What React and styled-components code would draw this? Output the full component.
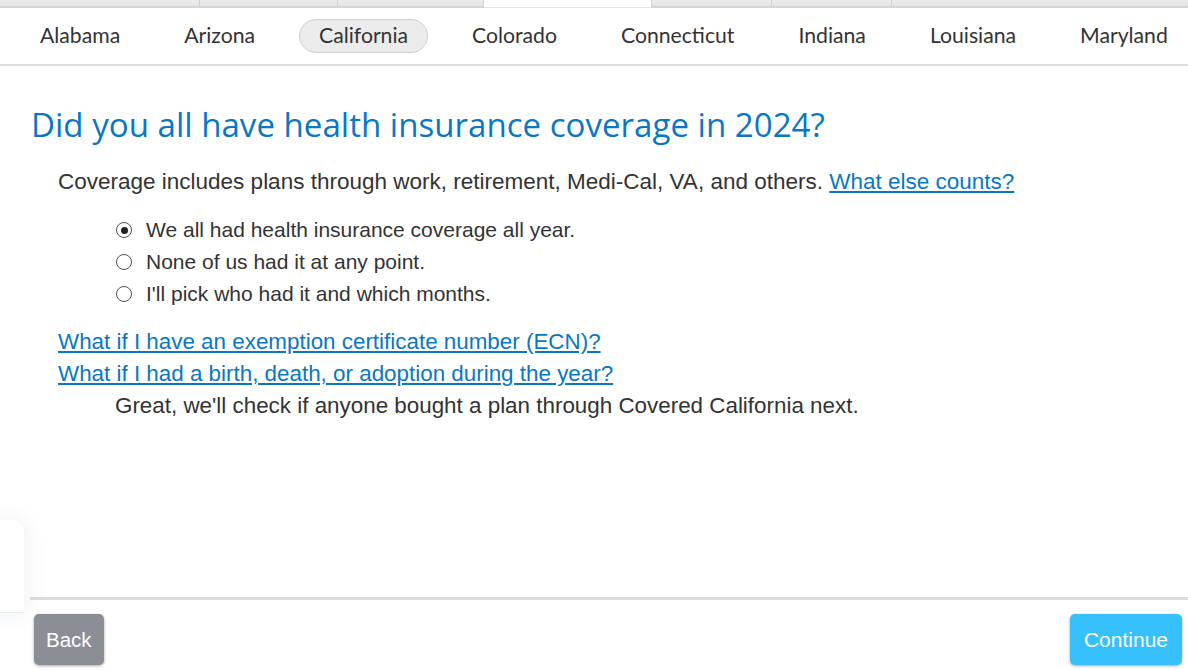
import styled, { createGlobalStyle } from "styled-components";

const GlobalStyle = createGlobalStyle`
  body {
    margin: 0;
    background: #fff;
    font-family: "Liberation Sans", Arial, sans-serif;
    color: #333;
  }
`;

const topTabs = [200, 138, 146, 168, 120, 120, 296];
const states = ["Alabama", "Arizona", "California", "Colorado", "Connecticut", "Indiana", "Louisiana", "Maryland"];

const App = () => {
  return (
    <Page>
      <GlobalStyle />
      <TabStrip>
        {topTabs.map((w, i) => (
          <TopTab key={i} style={{ width: w }} active={i === 3} />
        ))}
      </TabStrip>
      <StateNav>
        {states.map((s) => (
          <StateItem key={s} selected={s === "California"}>{s}</StateItem>
        ))}
      </StateNav>

      <Content>
        <Heading>Did you all have health insurance coverage in 2024?</Heading>
        <Intro>
          Coverage includes plans through work, retirement, Medi-Cal, VA, and others.{" "}
          <Link href="#">What else counts?</Link>
        </Intro>
        <RadioList>
          <RadioRow><Radio checked /> We all had health insurance coverage all year.</RadioRow>
          <RadioRow><Radio /> None of us had it at any point.</RadioRow>
          <RadioRow><Radio /> I'll pick who had it and which months.</RadioRow>
        </RadioList>
        <LinkList>
          <Link href="#">What if I have an exemption certificate number (ECN)?</Link>
          <Link href="#">What if I had a birth, death, or adoption during the year?</Link>
        </LinkList>
        <Note>Great, we'll check if anyone bought a plan through Covered California next.</Note>
      </Content>

      <Footer>
        <Button kind="back">Back</Button>
        <Button kind="continue">Continue</Button>
      </Footer>

      <SideTab />
    </Page>
  );
};

export default App;

const Page = styled.div`
  position: relative;
  height: 670px;
  overflow: hidden;
  display: flex;
  flex-direction: column;
`;

const TabStrip = styled.div`
  display: flex;
  height: 8px;
`;

const TopTab = styled.div`
  box-sizing: border-box;
  height: 8px;
  background: ${(p) => (p.active ? "#fff" : "linear-gradient(#ececec, #e4e4e4)")};
  border-right: 1px solid #d2d2d2;
  border-bottom: ${(p) => (p.active ? "1px solid #e4e4e4" : "2px solid #d6d6d6")};
  &:last-child { border-right: none; }
`;

const StateNav = styled.nav`
  display: flex;
  align-items: center;
  gap: 24px;
  height: 56px;
  padding-left: 20px;
  border-bottom: 2px solid #dcdcdc;
  white-space: nowrap;
`;

const StateItem = styled.div`
  font-family: "Lato", "Noto Sans", sans-serif;
  font-size: 21.2px;
  color: #333;
  padding: 0 19px;
  height: 32px;
  line-height: 31px;
  border-radius: 17px;
  border: 1px solid ${(p) => (p.selected ? "#cfcfcf" : "transparent")};
  background: ${(p) => (p.selected ? "#ececec" : "transparent")};
`;

const Content = styled.main`
  flex: 1;
  padding: 0 0 0 31px;
`;

const Heading = styled.h1`
  margin: 39px 0 0;
  font-family: "Open Sans", "Noto Sans", sans-serif;
  font-weight: 400;
  font-size: 33.1px;
  line-height: 40px;
  color: #0a77c4;
`;

const Intro = styled.p`
  margin: 23px 0 0 27px;
  font-size: 22.5px;
  line-height: 28px;
`;

const Link = styled.a`
  color: #0a77c4;
  text-decoration: underline;
  text-underline-offset: 2px;
`;

const RadioList = styled.div`
  margin: 18px 0 0 85px;
  display: flex;
  flex-direction: column;
`;

const RadioRow = styled.label`
  display: flex;
  align-items: center;
  gap: 14px;
  height: 32px;
  font-size: 21px;
`;

const Radio = styled.span`
  box-sizing: border-box;
  width: 16px;
  height: 16px;
  border-radius: 50%;
  border: 1px solid #555;
  background: #fff;
  position: relative;
  &::after {
    content: "";
    display: ${(p) => (p.checked ? "block" : "none")};
    position: absolute;
    inset: 3.5px;
    border-radius: 50%;
    background: #222;
  }
`;

const LinkList = styled.div`
  margin: 16px 0 0 27px;
  display: flex;
  flex-direction: column;
  font-size: 22.4px;
  line-height: 32px;
`;

const Note = styled.p`
  margin: 0 0 0 84px;
  font-size: 22.4px;
  line-height: 32px;
`;

const Footer = styled.footer`
  margin-left: 30px;
  border-top: 3px solid #dddddd;
  display: flex;
  justify-content: space-between;
  padding: 14px 6px 5px 4px;
`;

const Button = styled.button`
  font-family: "Liberation Sans", Arial, sans-serif;
  font-size: ${(p) => (p.kind === "continue" ? "21px" : "20.5px")};
  color: #fff;
  border: none;
  border-radius: 5px;
  height: 51px;
  padding: 0 ${(p) => (p.kind === "continue" ? "14px" : "12px")};
  background: ${(p) => (p.kind === "continue" ? "#36c0fc" : "#8b8e94")};
  box-shadow: 0 1px 3px rgba(0, 0, 0, 0.35);
`;

const SideTab = styled.div`
  position: absolute;
  left: -8px;
  top: 520px;
  width: 32px;
  height: 92px;
  background: #fff;
  border-radius: 12px 12px 0 0;
  box-shadow: 0 0 24px rgba(0, 0, 0, 0.08);
  border-bottom: 1px solid #e4eef7;
`;
